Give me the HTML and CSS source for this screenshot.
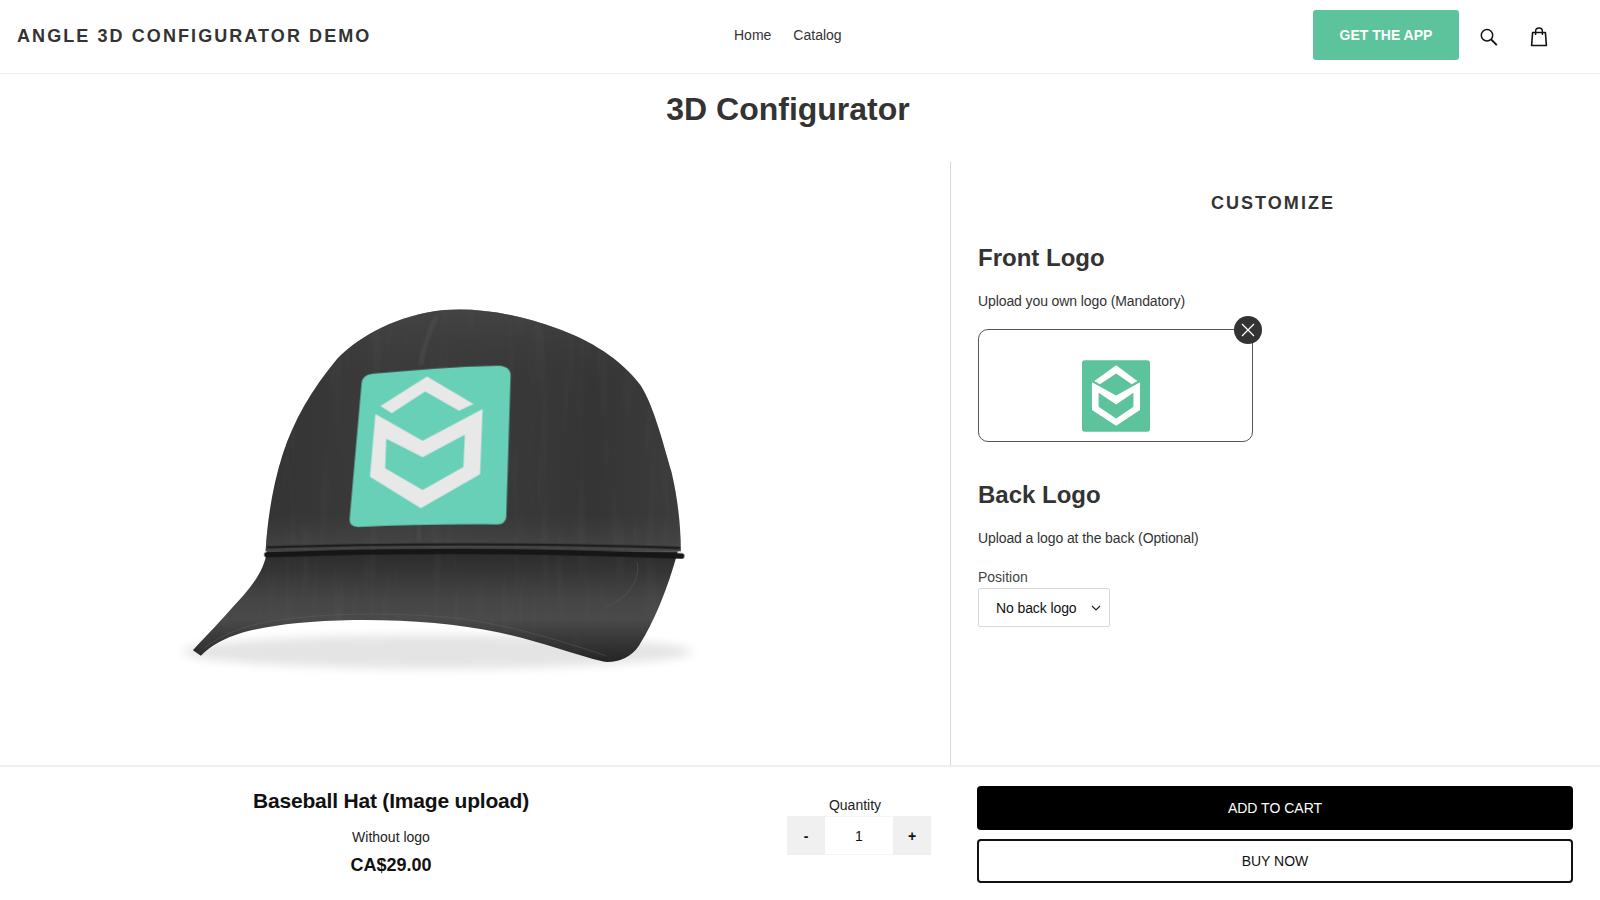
FILE: index.html
```html
<!DOCTYPE html>
<html lang="en">
<head>
<meta charset="utf-8">
<title>3D Configurator</title>
<link rel="stylesheet" href="styles.css">
</head>
<body>
<header class="site-header">
  <a class="brand">ANGLE 3D CONFIGURATOR DEMO</a>
  <nav class="nav"><a>Home</a><a>Catalog</a></nav>
  <div class="tools">
    <a class="get-app">GET THE APP</a>
    <svg class="icon-search" viewBox="0 0 18 18" width="18" height="18"><circle cx="7" cy="7.200" r="5.700" fill="none" stroke="#111" stroke-width="1.500"/><path d="M11.200 11.500 16.800 17.200" fill="none" stroke="#111" stroke-width="1.800"/></svg>
    <svg class="icon-bag" viewBox="0 0 18 20" width="18" height="20"><path d="M2.600 5.500h12.800l1 13H1.600z" fill="none" stroke="#111" stroke-width="1.600" stroke-linejoin="round"/><path d="M5.600 8V4.500C5.600 2.400 7 1 9 1s3.400 1.400 3.400 3.500V8" fill="none" stroke="#111" stroke-width="1.400"/></svg>
  </div>
</header>

<h1 class="page-title">3D Configurator</h1>

<main class="workspace">
  <section class="viewer">
    <svg class="hat" viewBox="0 0 1568 1194" width="570" height="400" preserveAspectRatio="none">
      <defs>
        <linearGradient id="crown" x1="0" x2="1" y1="0" y2="0">
          <stop offset="0" stop-color="#343434"/><stop offset=".3" stop-color="#3b3b3b"/><stop offset=".55" stop-color="#393939"/><stop offset=".8" stop-color="#353535"/><stop offset="1" stop-color="#3c3c3c"/>
        </linearGradient>
        <linearGradient id="crownShade" x1="0" x2="0" y1="0" y2="1">
          <stop offset="0" stop-color="#4a4a4a" stop-opacity=".6"/><stop offset=".3" stop-color="#3c3c3c" stop-opacity="0"/><stop offset=".85" stop-color="#4a4a4a" stop-opacity="0"/><stop offset="1" stop-color="#4e4e4e" stop-opacity=".6"/>
        </linearGradient>
        <linearGradient id="brim" x1="0" x2="0" y1="790" y2="1110" gradientUnits="userSpaceOnUse">
          <stop offset="0" stop-color="#2c2c2c"/><stop offset=".42" stop-color="#454546"/><stop offset=".6" stop-color="#4a4a4b"/><stop offset="1" stop-color="#242424"/>
        </linearGradient>
        <filter id="soft" x="-10%" y="-60%" width="120%" height="220%"><feGaussianBlur stdDeviation="14"/></filter>
        <filter id="fold" x="-30%" y="-30%" width="160%" height="160%"><feGaussianBlur stdDeviation="5"/></filter>
        <filter id="grain" x="0" y="0" width="100%" height="100%">
          <feTurbulence type="fractalNoise" baseFrequency=".03 .003" numOctaves="3" seed="4"/>
          <feColorMatrix values="0 0 0 0 1  0 0 0 0 1  0 0 0 0 1  1.600 0 0 0 -.7"/>
        </filter>
        <clipPath id="capClip">
          <path d="M318 780C322 700 335 590 365 490C395 390 445 295 515 205C580 135 680 75 810 60C910 52 1020 75 1120 115C1210 150 1295 205 1350 285C1385 345 1410 450 1435 545C1452 625 1460 700 1460 780Z"/>
          <path d="M322 780C312 850 268 900 218 958C180 1005 148 1040 118 1075L140 1092C165 1062 205 1038 255 1022C330 1000 430 988 560 985C700 983 840 995 960 1022C1060 1045 1160 1085 1250 1110C1290 1112 1322 1098 1345 1062C1385 995 1425 890 1452 780Z"/>
        </clipPath>
      </defs>
      <ellipse class="hat-shadow" cx="790" cy="1080" rx="700" ry="50" filter="url(#soft)"/>
      <path fill="url(#brim)" d="M322 780C312 850 268 900 218 958C180 1005 148 1040 118 1075L140 1092C165 1062 205 1038 255 1022C330 1000 430 988 560 985C700 983 840 995 960 1022C1060 1045 1160 1085 1250 1110C1290 1112 1322 1098 1345 1062C1385 995 1425 890 1452 780Z"/>
      <path d="M150 1068C200 1025 270 1000 340 987C480 965 640 962 800 975C960 990 1110 1040 1255 1092" fill="none" stroke="#6a5a56" stroke-width="2" opacity=".7"/>
      <path d="M1340 810C1350 860 1320 920 1255 945" fill="none" stroke="#5e5e5e" stroke-width="3" opacity=".4"/>
      <path fill="url(#crown)" d="M318 780C322 700 335 590 365 490C395 390 445 295 515 205C580 135 680 75 810 60C910 52 1020 75 1120 115C1210 150 1295 205 1350 285C1385 345 1410 450 1435 545C1452 625 1460 700 1460 780Z"/>
      <path fill="url(#crownShade)" d="M318 780C322 700 335 590 365 490C395 390 445 295 515 205C580 135 680 75 810 60C910 52 1020 75 1120 115C1210 150 1295 205 1350 285C1385 345 1410 450 1435 545C1452 625 1460 700 1460 780Z"/>
      <g clip-path="url(#capClip)"><rect width="1568" height="1194" filter="url(#grain)" opacity=".035"/></g>
      <g fill="none" filter="url(#fold)">
        <path d="M790 75C770 120 750 170 745 225" stroke="#575757" stroke-width="10" opacity=".5"/>
        <path d="M740 705V750" stroke="#5a5a5a" stroke-width="8" opacity=".5"/>
      </g>
      <path d="M322 768C650 756 1100 756 1458 770" fill="none" stroke="#1d1d1d" stroke-width="7"/>
      <path d="M322 790C700 775 1100 778 1462 794" fill="none" stroke="#161616" stroke-width="16" stroke-linecap="round"/>
      <path fill="#67d0b6" d="M612 250C720 240 840 228 960 226Q992 228 992 256L980 678Q978 698 955 700C830 698 700 702 572 707Q548 706 549 684L582 278Q584 254 612 250Z"/>
      <path fill="#e8e8e8" d="M634 346 762 258 890 340 850 360 757 303 665 368Z"/>
      <path fill="#e8e8e8" fill-rule="evenodd" d="M620 370 750 450 915 355 908 550 745 651 605 557ZM650 444 647 532 750 597 862 528 866 432 750 499Z"/>
    </svg>
  </section>

  <section class="panel">
    <h2 class="panel-title">CUSTOMIZE</h2>
    <h3 class="option-title">Front Logo</h3>
    <p class="option-text">Upload you own logo (Mandatory)</p>
    <div class="upload-box">
      <svg class="thumb" viewBox="0 0 205 215" width="68" height="72">
        <rect width="205" height="215" rx="8" fill="#5cc39c"/>
        <path fill="#fff" d="M37 62 103 15 167 62 150 72 103 40 54 72Z"/>
        <path fill="#fff" fill-rule="evenodd" d="M30 66 103 106 175 66V150L103 197 30 150ZM50 98V140L103 175 155 140V98L103 133Z"/>
      </svg>
      <button class="remove" type="button" aria-label="Remove">
        <svg viewBox="0 0 16 16" width="16" height="16"><path d="M2 2 14 14M14 2 2 14" stroke="#fff" stroke-width="1.300" fill="none"/></svg>
      </button>
    </div>
    <h3 class="option-title back">Back Logo</h3>
    <p class="option-text">Upload a logo at the back (Optional)</p>
    <label class="field-label">Position</label>
    <div class="select">
      <span>No back logo</span>
      <svg viewBox="0 0 10 6" width="10" height="6"><path d="M1 1 5 5 9 1" fill="none" stroke="#222" stroke-width="1.200"/></svg>
    </div>
  </section>
</main>

<footer class="buybar">
  <div class="product">
    <div class="product-name">Baseball Hat (Image upload)</div>
    <div class="variant">Without logo</div>
    <div class="price">CA$29.00</div>
  </div>
  <div class="quantity">
    <div class="quantity-label">Quantity</div>
    <div class="stepper"><span class="step">-</span><span class="qty">1</span><span class="step">+</span></div>
  </div>
  <div class="actions">
    <a class="btn btn-primary">ADD TO CART</a>
    <a class="btn btn-outline">BUY NOW</a>
  </div>
</footer>
</body>
</html>
```

FILE: styles.css
```css
* { box-sizing: border-box; }
html, body { margin: 0; padding: 0; }
body {
  width: 1600px;
  height: 900px;
  overflow: hidden;
  background: #fff;
  color: #333;
  font-family: "Liberation Sans", Arial, sans-serif;
}
.site-header {
  display: grid;
  grid-template-columns: 717px auto 1fr;
  align-items: center;
  height: 74px;
  padding: 0 20px 4px 17px;
  border-bottom: 1px solid #ececec;
}
.brand {
  margin-top: 4px;
  font-size: 18px;
  font-weight: 700;
  letter-spacing: 2.08px;
  color: #333;
  white-space: nowrap;
}
.nav { display: flex; gap: 22px; font-size: 14px; color: #333; }
.tools { display: flex; align-items: center; justify-content: flex-end; }
.get-app {
  display: flex;
  align-items: center;
  justify-content: center;
  width: 146px;
  height: 50px;
  background: #5cc39c;
  border-radius: 3px;
  color: #fff;
  font-size: 14px;
  font-weight: 700;
}
.icon-search { margin: 4px 0 0 21px; }
.icon-bag { margin: 4px 32px 0 32px; }
.page-title {
  margin: 0;
  height: 88px;
  padding: 17px 24px 0 0;
  text-align: center;
  font-size: 32px;
  line-height: 36px;
  font-weight: 700;
  color: #333;
}
.workspace {
  display: grid;
  grid-template-columns: 951px 1fr;
  height: 603px;
}
.viewer {
  padding: 128px 0 0 150px;
  border-right: 1px solid #d9d9d9;
}
.hat { display: block; }
.hat-shadow { fill: #e4e4e4; }
.panel { padding: 30px 32px 0 27px; }
.panel-title {
  margin: 0 0 29px;
  text-align: center;
  font-size: 18px;
  line-height: 22px;
  font-weight: 700;
  letter-spacing: 2.06px;
  color: #333;
}
.option-title {
  margin: 0 0 19px;
  font-size: 24px;
  line-height: 30px;
  font-weight: 700;
  color: #333;
}
.option-title.back { margin: 38px 0 19px; }
.option-text {
  margin: 0 0 19px;
  font-size: 14px;
  line-height: 18px;
  letter-spacing: -0.1px;
  color: #333;
}
.upload-box {
  position: relative;
  display: flex;
  align-items: center;
  justify-content: center;
  width: 275px;
  height: 113px;
  border: 1.5px solid #555;
  border-radius: 10px;
}
.thumb { display: block; margin-top: 20px; }
.remove {
  position: absolute;
  top: -14px;
  right: -10px;
  display: flex;
  align-items: center;
  justify-content: center;
  width: 28px;
  height: 28px;
  padding: 0;
  border: 0;
  border-radius: 50%;
  background: #333;
}
.field-label {
  display: block;
  margin: 21px 0 2px;
  font-size: 14px;
  line-height: 18px;
  color: #444;
}
.select {
  display: flex;
  align-items: center;
  justify-content: space-between;
  width: 132px;
  height: 39px;
  padding: 0 8px 0 17px;
  border: 1px solid #d8d8d8;
  border-radius: 2px;
  font-size: 14px;
  letter-spacing: -0.1px;
  color: #111;
}
.buybar {
  display: flex;
  height: 135px;
  border-top: 2px solid #efefef;
}
.product {
  width: 782px;
  padding-top: 21px;
  text-align: center;
  color: #111;
}
.product-name { font-size: 21px; line-height: 26px; font-weight: 700; letter-spacing: -0.19px; }
.variant { margin-top: 14px; font-size: 14px; line-height: 18px; color: #222; }
.price { margin-top: 7px; font-size: 18px; line-height: 24px; font-weight: 700; }
.quantity { width: 144px; margin-left: 5px; padding-top: 29px; text-align: center; }
.quantity-label { font-size: 14px; line-height: 18px; color: #222; margin-right: 8px; }
.stepper { display: flex; height: 39px; margin-top: 2px; font-size: 14px; color: #111; }
.step {
  display: flex;
  align-items: center;
  justify-content: center;
  width: 38px;
  background: #f0f0f0;
  font-weight: 700;
}
.qty {
  flex: 1;
  display: flex;
  align-items: center;
  justify-content: center;
  border-top: 1px solid #f5f5f5;
  border-bottom: 1px solid #f5f5f5;
}
.actions {
  display: flex;
  flex-direction: column;
  gap: 9px;
  width: 596px;
  margin-left: 46px;
  padding-top: 19px;
}
.btn {
  display: flex;
  align-items: center;
  justify-content: center;
  height: 44px;
  border-radius: 4px;
  font-size: 14px;
  color: #111;
}
.btn-primary { background: #000; color: #fff; }
.btn-outline { border: 2px solid #111; background: #fff; }
```
